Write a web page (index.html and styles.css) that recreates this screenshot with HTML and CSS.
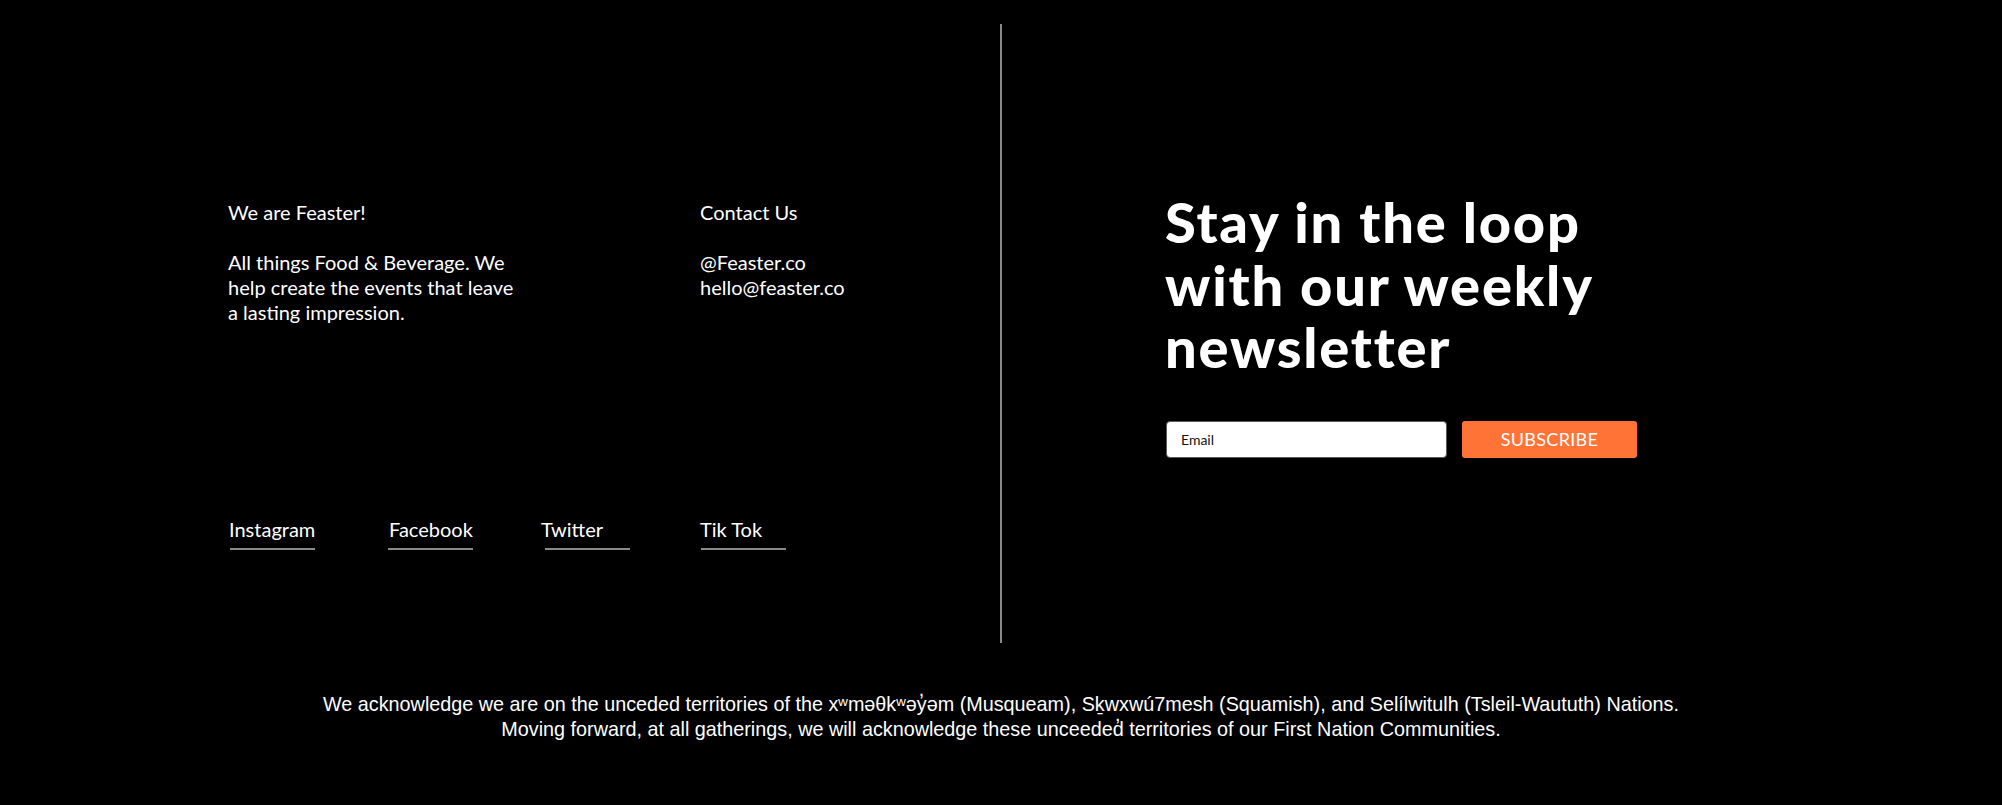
FILE: index.html
```html
<!DOCTYPE html>
<html lang="en">
<head>
<meta charset="utf-8">
<title>Feaster footer</title>
<link rel="stylesheet" href="styles.css">
</head>
<body>
<footer class="footer">
  <div class="main">
    <section class="info">
      <div class="info-cols">
        <div class="about">
          <p class="title">We are Feaster!</p>
          <p class="text">All things Food &amp; Beverage. We<br>help create the events that leave<br>a lasting impression.</p>
        </div>
        <div class="contact">
          <p class="title">Contact Us</p>
          <p class="text">@Feaster.co<br>hello@feaster.co</p>
        </div>
      </div>
      <nav class="socials">
        <a class="social s1" href="#"><span class="label">Instagram</span><span class="bar"></span></a>
        <a class="social s2" href="#"><span class="label">Facebook</span><span class="bar"></span></a>
        <a class="social s3" href="#"><span class="label">Twitter</span><span class="bar"></span></a>
        <a class="social s4" href="#"><span class="label">Tik Tok</span><span class="bar"></span></a>
      </nav>
    </section>
    <section class="newsletter">
      <h2 class="heading">Stay in the loop<br>with our weekly<br>newsletter</h2>
      <form class="form">
        <input class="email" type="text" placeholder="Email">
        <button class="subscribe" type="button">SUBSCRIBE</button>
      </form>
    </section>
  </div>
  <p class="ack">We acknowledge we are on the unceded territories of the xʷməθkʷəy̓əm (Musqueam), Sḵwxwú7mesh (Squamish), and Selílwitulh (Tsleil-Waututh) Nations.<br>Moving forward, at all gatherings, we will acknowledge these unceeded&#x313; territories of our First Nation Communities.</p>
</footer>
</body>
</html>
```
FILE: styles.css
```css
html, body {
  margin: 0;
  padding: 0;
  background: #000;
}
body {
  width: 2002px;
  height: 805px;
  overflow: hidden;
  color: #fff;
  font-family: Lato, "Noto Sans", sans-serif;
}
p { margin: 0; }

.main {
  display: flex;
  padding-top: 24px;
}

.info {
  width: 1000px;
  height: 619px;
  border-right: 2px solid #8a8a8a;
  box-sizing: content-box;
  display: flex;
  flex-direction: column;
}

.info-cols {
  display: grid;
  grid-template-columns: 472px auto;
  padding-left: 228px;
  padding-top: 176px;
  font-size: 20px;
  line-height: 25px;
}
.title { margin-bottom: 25px; }

.socials {
  display: grid;
  grid-template-columns: 160px 152px 159px auto;
  padding-left: 229px;
  margin-top: 192px;
}
.social {
  color: #fff;
  text-decoration: none;
  font-size: 20px;
  line-height: 24px;
  display: flex;
  flex-direction: column;
}
.bar {
  display: block;
  width: 85px;
  height: 2px;
  margin-top: 7px;
  background: #8a8a8a;
}
.s1 .bar { margin-left: 1px; }
.s2 .bar { margin-left: -1px; }
.s3 .bar { margin-left: 4px; }
.s4 .bar { margin-left: 1px; }

.newsletter {
  padding-left: 163px;
  padding-top: 167px;
}
.heading {
  margin: 0;
  font-size: 56px;
  font-weight: 900;
  line-height: 62.5px;
  letter-spacing: 1.8px;
}
.form {
  display: flex;
  gap: 15px;
  margin-top: 42px;
  padding-left: 1px;
}
.email {
  box-sizing: border-box;
  width: 281px;
  height: 37px;
  border: 1px solid #5a5a5a;
  border-radius: 4px;
  background: #fff;
  padding: 0 14px;
  font-family: Lato, sans-serif;
  font-size: 14px;
  color: #111;
  outline: none;
}
.email::placeholder { color: #111; }
.subscribe {
  box-sizing: border-box;
  width: 175px;
  height: 37px;
  border: none;
  border-radius: 3px;
  background: #ff7337;
  color: #fff;
  font-family: Lato, sans-serif;
  font-size: 18px;
  letter-spacing: 0.3px;
}

.ack {
  margin-top: 49px;
  text-align: center;
  font-family: "Liberation Sans", Arial, sans-serif;
  font-size: 19.8px;
  line-height: 25px;
}
```
